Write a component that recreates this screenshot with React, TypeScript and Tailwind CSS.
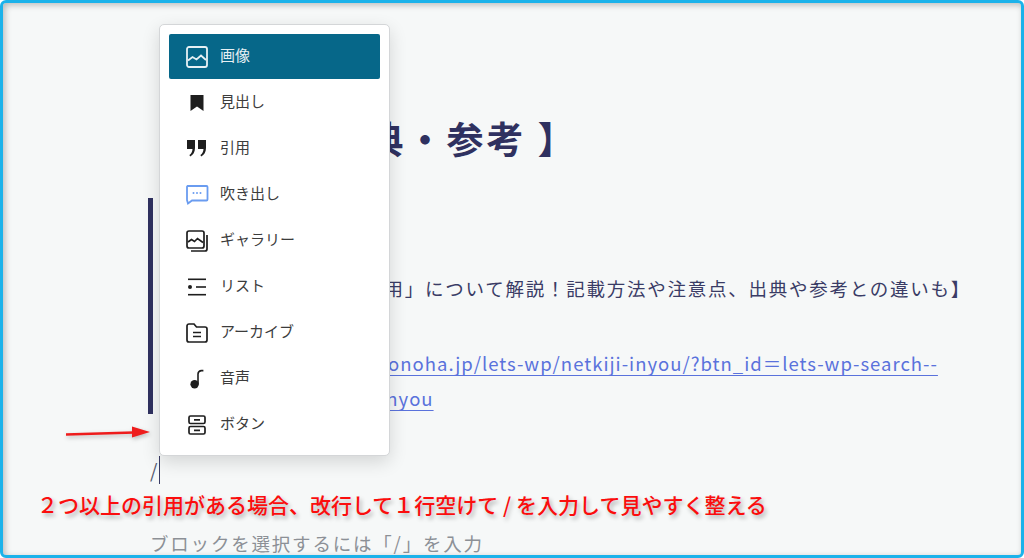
import type { ReactNode } from 'react'

const font = "font-['Noto_Sans_CJK_JP','Noto_Sans',sans-serif]"

function ImageIcon() {
  return (
    <svg width="22" height="22" viewBox="0 0 22 22" fill="none" stroke="currentColor" strokeWidth="1.8">
      <rect x="1" y="1" width="20" height="20" rx="2" />
      <path d="M2 14.5 6.5 11l4 2.5 4.5-4 5 4.5" />
    </svg>
  )
}

function BookmarkIcon() {
  return (
    <svg width="16" height="18" viewBox="0 0 16 18" fill="#1e1e1e">
      <path d="M1.5 1h13v16L8 12.5 1.5 17z" />
    </svg>
  )
}

function QuoteIcon() {
  return (
    <svg width="20" height="17" viewBox="0 0 20 17" fill="#1e1e1e">
      <path d="M0 0h8v8c0 4-1.8 7-4.8 8.5l-.8-1.6C4.4 13.7 5.3 12 5.5 9H0zM11 0h8v8c0 4-1.8 7-4.8 8.5l-.8-1.6c2-1.2 2.9-2.9 3.1-5.9H11z" />
    </svg>
  )
}

function BubbleIcon() {
  return (
    <svg width="24" height="20" viewBox="0 0 24 20" fill="none" stroke="#6a9cf0" strokeWidth="1.8">
      <path d="M2.5 1h19a1 1 0 0 1 1 1v12.5a1 1 0 0 1-1 1H7l-4 3-1-3.500V2a1 1 0 0 1 .5-1z" />
      <g fill="#6a9cf0" stroke="none">
        <circle cx="8.5" cy="8" r="1" />
        <circle cx="12" cy="8" r="1" />
        <circle cx="15.5" cy="8" r="1" />
      </g>
    </svg>
  )
}

function GalleryIcon() {
  return (
    <svg width="22" height="22" viewBox="0 0 22 22" fill="none" stroke="#1e1e1e" strokeWidth="1.7">
      <rect x="1" y="1" width="17" height="17" rx="2" />
      <path d="M2 12 5.5 9.5l3 2 3-3 5.5 4" />
      <path d="M21 5v14a2 2 0 0 1-2 2H5" />
    </svg>
  )
}

function ListIcon() {
  return (
    <svg width="20" height="18" viewBox="0 0 20 18" fill="#1e1e1e">
      <rect x="1" y="0.5" width="18" height="1.6" />
      <circle cx="3" cy="9" r="2" />
      <rect x="9" y="8.2" width="10" height="1.6" />
      <rect x="1" y="15.9" width="18" height="1.6" />
    </svg>
  )
}

function ArchiveIcon() {
  return (
    <svg width="22" height="20" viewBox="0 0 22 20" fill="none" stroke="#1e1e1e" strokeWidth="1.7">
      <path d="M1 3a2 2 0 0 1 2-2h5l2.5 3H19a2 2 0 0 1 2 2v11a2 2 0 0 1-2 2H3a2 2 0 0 1-2-2z" />
      <path d="M7 9.5h8M7 13.5h8" />
    </svg>
  )
}

function NoteIcon() {
  return (
    <svg width="14" height="20" viewBox="0 0 14 20" fill="#1e1e1e">
      <circle cx="4.6" cy="15.2" r="4.2" />
      <path d="M7.2 15V5a4.2 4.2 0 0 1 4.2-4.2h2v1.7h-2A2.6 2.6 0 0 0 8.800 5v10z" />
    </svg>
  )
}

function ButtonIcon() {
  return (
    <svg width="18" height="20" viewBox="0 0 18 20" fill="none" stroke="#1e1e1e" strokeWidth="1.7">
      <rect x="1" y="1" width="16" height="7.5" rx="1.5" />
      <rect x="1" y="11.5" width="16" height="7.5" rx="1.5" />
      <path d="M6 4.8h6M6 15.3h6" />
    </svg>
  )
}

const items: { label: string; icon: ReactNode }[] = [
  { label: '画像', icon: <ImageIcon /> },
  { label: '見出し', icon: <BookmarkIcon /> },
  { label: '引用', icon: <QuoteIcon /> },
  { label: '吹き出し', icon: <BubbleIcon /> },
  { label: 'ギャラリー', icon: <GalleryIcon /> },
  { label: 'リスト', icon: <ListIcon /> },
  { label: 'アーカイブ', icon: <ArchiveIcon /> },
  { label: '音声', icon: <NoteIcon /> },
  { label: 'ボタン', icon: <ButtonIcon /> },
]

function BlockMenu() {
  return (
    <div className="absolute left-[159px] top-[24px] w-[231px] rounded-[5px] border border-[#d4d6d8] bg-white px-[9px] pb-[8px] pt-[9px] shadow-[0_6px_18px_rgba(0,0,0,0.14)]">
      <ul className="flex flex-col gap-px">
        {items.map((item, i) => (
          <li
            key={item.label}
            className={
              i === 0
                ? 'flex h-[45px] items-center rounded-[2px] bg-[#066789] text-[#e6f0f4]'
                : 'flex h-[45px] items-center text-[#3c3c3c]'
            }
          >
            <span className="flex w-[56px] justify-center">{item.icon}</span>
            <span className="-ml-[5px] mb-[3px] text-[15px] leading-[20px]">{item.label}</span>
          </li>
        ))}
      </ul>
    </div>
  )
}

function Annotation() {
  return (
    <>
      <svg className="absolute left-[64px] top-[422px] drop-shadow-[1px_2px_2px_rgba(0,0,0,0.25)]" width="90" height="20" viewBox="0 0 90 20">
        <path d="M2 12.5 70 10.5" stroke="#ee1c1c" strokeWidth="2.6" />
        <path d="M68 4.5 86 10 68 15.5z" fill="#ee1c1c" />
      </svg>
      <p className="absolute left-[37px] top-[488px] whitespace-nowrap text-[21px] font-medium leading-[32px] text-[#fb0d0d] [text-shadow:2px_3px_4px_rgba(0,0,0,0.3)]">
        ２つ以上の引用がある場合、改行して１行空けて / を入力して見やすく整える
      </p>
    </>
  )
}

export default function App() {
  return (
    <div className={`${font} relative h-[558px] w-[1024px] overflow-hidden bg-white`}>
      <div className="h-full rounded-[6px] border-[3px] border-[#1bb2ea] bg-[#f6f8f8] pl-[145px] shadow-[inset_2px_2px_6px_rgba(0,0,0,0.25)]">
        <h1 className="pl-[7px] pt-[108px] whitespace-nowrap text-[37px] font-bold leading-[54px] tracking-[3px] text-[#2f3160]">
          【 引用・出典・参考 】
        </h1>
        <blockquote className="mt-[33px] h-[216px] border-l-[5px] border-[#2f3160] text-[18.5px] text-[#3a3c66]">
          <p className="pl-[29px] pt-[72px] whitespace-nowrap leading-[36px] tracking-[1.75px]">
            【ネット記事での「引用」について解説！記載方法や注意点、出典や参考との違いも】
          </p>
          <div className="mt-[40px] leading-[35px] tracking-[1px] text-[#5a72dc]">
            <a className="ml-[100px] block w-fit whitespace-nowrap underline decoration-1 underline-offset-4">
              https://www.conoha.jp/lets-wp/netkiji-inyou/?btn_id＝lets-wp-search--
            </a>
            <a className="ml-[159px] block w-fit whitespace-nowrap underline decoration-1 underline-offset-4">
              netkiji-inyou
            </a>
          </div>
        </blockquote>
        <div className="mt-[42px] flex h-[28px] items-center text-[19px] text-[#555a70]">
          <span className="pl-[2px]">/</span>
          <span className="ml-[2px] h-[28px] w-px bg-[#3a3c66]" />
        </div>
        <p className="ml-[2px] mt-[46px] whitespace-nowrap text-[18.5px] leading-[27px] tracking-[1.8px] text-[#8c9096]">
          ブロックを選択するには「/」を入力
        </p>
      </div>
      <BlockMenu />
      <Annotation />
    </div>
  )
}
